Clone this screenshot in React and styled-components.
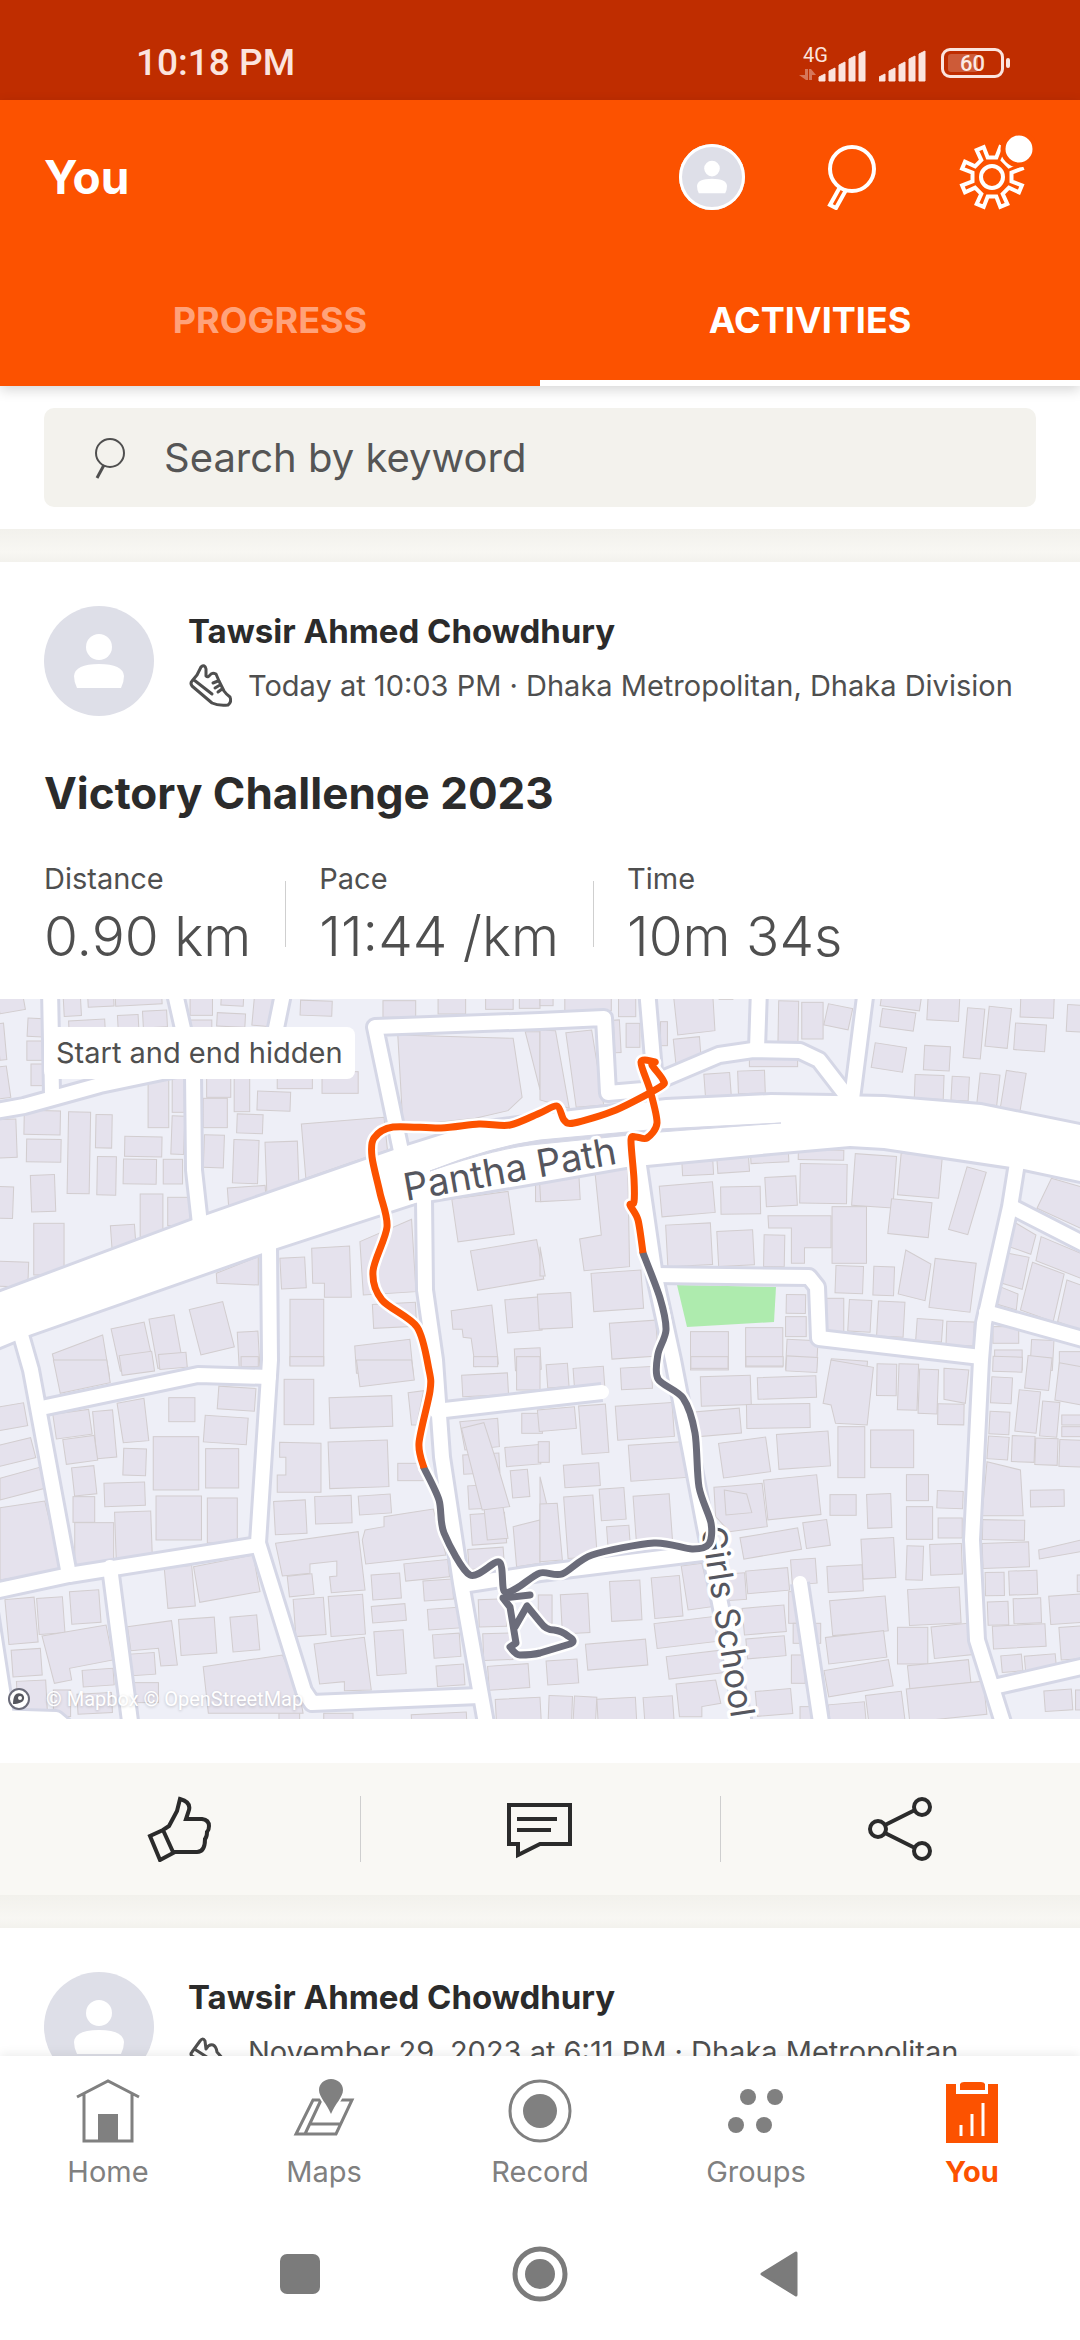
import { useState } from "react";
import styled, { createGlobalStyle } from "styled-components";



// Map artwork, drawn on a 1080 x 720 canvas.
// A building is [x, y, width, height, angle] in the units of its tile,
// anything that is not a plain box is listed as a polygon.
const TILES = [
    {
        x: 0,
        y: -9,
        boxes: [
            [-5, 15, 75, 50, -10], [185, 20, 50, 58, -3], [255, 0, 75, 50, -3], [335, 10, 135, 35, -3],
            [80, 85, 45, 55, 3], [200, 90, 105, 40, -3], [342, 75, 60, 40, -3], [415, 62, 70, 50, -3],
            [552, 20, 65, 56, 0], [642, 15, 65, 32, 3], [735, 20, 55, 88, 5], [630, 70, 82, 40, 3],
            [535, 90, 80, 30, 0], [872, 32, 92, 45, 2], [1112, 32, 95, 50, 0], [1272, 15, 80, 57, 0],
            [1410, 10, 80, 48, 0], [1508, 20, 60, 35, 0], [-5, 100, 20, 110, -5], [78, 153, 45, 58, 0],
            [90, 222, 35, 65, 0], [-10, 230, 35, 95, -8], [430, 265, 60, 148, 0], [500, 265, 35, 102, 0],
            [600, 262, 70, 60, 0], [680, 265, 45, 100, 0], [805, 250, 102, 46, 0], [935, 245, 105, 65, 0],
            [590, 325, 70, 88, 0], [688, 373, 75, 57, 2], [747, 305, 96, 57, 2], [592, 435, 58, 98, 2],
            [498, 378, 37, 115, 2], [70, 362, 105, 72, 1], [-5, 388, 53, 115, -2], [77, 448, 100, 68, 1],
            [197, 366, 64, 245, 1], [278, 374, 47, 100, 1], [282, 500, 55, 115, 1], [362, 440, 108, 60, 1],
            [358, 508, 96, 74, 1], [474, 508, 56, 74, 0], [-5, 590, 43, 95, 2], [90, 555, 70, 110, -2],
            [98, 700, 88, 155, 0], [323, 705, 70, 75, -4], [407, 612, 66, 130, 0], [487, 622, 65, 85, 0],
            [-5, 815, 87, 75, 2], [677, 450, 73, 130, 2], [772, 455, 94, 150, -2], [662, 590, 110, 60, -4],
            [815, 803, 72, 92, -3], [842, 928, 98, 198, 0], [1083, 940, 125, 72, -3], [335, 1005, 98, 130, -12],
            [445, 980, 74, 150, -10], [565, 945, 100, 140, -14], [692, 1025, 60, 120, -3], [1320, 615, 165, 130, -8],
            [1375, 765, 195, 120, -10], [1470, 925, 100, 100, -5], [1495, 1075, 75, 65, -3], [1555, 560, 15, 75, 0],
        ],
        shapes: [
            "1155,135 1490,145 1516,322 1475,362 1380,385 1170,408",
            "1525,125 1568,125 1568,300",
            "875,402 1115,382 1125,480 888,565",
            "628,850 750,800 750,885 630,880",
            "905,775 1015,768 1020,922 942,922 942,880 908,880",
            "1045,755 1195,688 1208,905 1055,915",
            "152,1092 298,1035 318,1160 168,1160",
            "1030,1068 1190,1048 1200,1150 1035,1150",
            "1310,962 1428,945 1447,1122 1380,1130 1368,1045 1345,1042 1342,1018 1315,1018",
        ],
    },
    {
        x: 540,
        y: -9,
        boxes: [
            [0, 20, 38, 27, 0], [72, 20, 135, 42, 0], [228, 20, 50, 60, 0], [215, 90, 18, 98, -3],
            [250, 100, 40, 72, 0], [350, 95, 20, 72, 0], [478, 250, 75, 68, -4], [575, 242, 78, 68, -2],
            [608, 205, 140, 25, 0], [692, 33, 58, 122, 1], [760, 37, 62, 110, 0], [830, 48, 72, 65, 12],
            [990, 62, 98, 55, 8], [990, 15, 115, 40, 8], [1125, 22, 92, 70, 3], [1235, 55, 50, 150, 5],
            [1298, 52, 65, 120, 6], [1395, 20, 97, 63, 2], [1378, 102, 90, 80, 4], [1530, 45, 50, 80, 3],
            [967, 165, 92, 75, 9], [1115, 168, 75, 73, 3], [1088, 255, 84, 72, 2], [1195, 260, 50, 72, 3],
            [1273, 252, 58, 92, 6], [1345, 245, 58, 115, 9], [520, 0, 40, 28, 0], [413, 515, 90, 40, -3],
            [515, 505, 92, 42, -4], [612, 490, 110, 28, -3], [750, 480, 132, 30, 1], [350, 582, 155, 92, -5],
            [525, 590, 115, 82, -1], [655, 560, 90, 88, -3], [755, 522, 136, 118, 1], [910, 495, 120, 155, 4],
            [1043, 495, 120, 125, 5], [1015, 632, 118, 105, 6], [1212, 535, 58, 195, 16], [368, 702, 130, 125, -3],
            [516, 722, 104, 105, -3], [650, 735, 60, 95, 1], [848, 650, 100, 170, 0], [1138, 812, 120, 148, 7],
            [858, 828, 80, 82, 2], [968, 830, 60, 86, 2], [832, 925, 50, 100, 0], [896, 930, 65, 95, 3],
            [980, 935, 77, 105, 3], [1093, 988, 75, 66, 4], [1180, 995, 80, 72, 2], [715, 914, 56, 56, 1],
            [713, 980, 60, 60, 0], [715, 1050, 90, 90, 3], [437, 1025, 110, 115, 0], [597, 1013, 108, 118, 0],
            [1315, 1010, 75, 50, 0], [1425, 1050, 65, 90, 3], [1320, 1080, 80, 60, 0], [1508, 1085, 62, 75, 0],
            [845, 1110, 105, 30, 4], [0, 560, 115, 72, -3], [152, 845, 145, 115, -4], [-5, 910, 97, 105, -3],
            [205, 995, 135, 108, -4],
        ],
        shapes: [
            "388,20 502,20 508,122 400,135",
            "387,148 463,140 467,195 395,225",
            "0,120 45,122 85,355 0,330",
            "75,128 150,120 185,345 105,352",
            "1485,565 1570,590 1570,715 1443,655",
            "662,677 845,677 845,773 768,773 768,820 730,820 730,714 664,714",
            "1062,780 1135,822 1118,932 1040,912",
            "1375,695 1440,735 1425,793 1362,770",
            "1455,740 1570,790 1570,865 1440,812",
            "1360,790 1420,802 1400,898 1342,880",
            "1430,817 1522,852 1490,995 1395,960",
            "1530,870 1570,885 1570,1020 1503,995",
            "1335,890 1388,912 1383,960 1318,940",
            "160,550 255,535 260,830 128,842 115,747 178,735",
            "0,770 15,858 0,858",
        ],
    },
    {
        x: 0,
        y: 361,
        boxes: [
            [350, -20, 95, 60, -8], [462, -20, 80, 45, -5], [700, -10, 50, 30, 0], [-10, 135, 85, 70, -10],
            [-10, 245, 108, 62, -14], [158, 155, 105, 75, -8], [275, 152, 58, 142, -5], [490, 113, 76, 72, 0],
            [633, 82, 108, 68, 4], [593, 170, 125, 80, 4], [187, 232, 92, 75, -8], [358, 266, 66, 80, 2],
            [445, 230, 132, 160, 0], [597, 266, 96, 118, 0], [212, 320, 65, 85, -6], [303, 368, 118, 70, -2],
            [212, 410, 63, 77, 0], [217, 488, 113, 130, 0], [335, 455, 105, 140, -2], [453, 408, 132, 132, 0],
            [602, 414, 87, 135, 0], [482, 620, 80, 122, -5], [522, 775, 104, 108, -4], [672, 768, 78, 105, -5],
            [380, 880, 70, 65, -4], [385, 968, 75, 60, 0], [20, 715, 85, 135, -5], [110, 713, 75, 108, -4],
            [205, 692, 85, 98, -4], [35, 868, 85, 80, -4], [240, 928, 90, 50, -4], [50, 962, 85, 90, -3],
            [155, 990, 50, 80, 0], [225, 1000, 100, 60, -3], [842, -10, 98, 28, 0], [825, 58, 86, 136, 0],
            [957, 110, 182, 92, -2], [955, 243, 172, 140, -2], [1155, 310, 80, 52, 0], [797, 422, 92, 100, -3],
            [915, 408, 106, 82, -2], [1042, 405, 93, 57, -4], [837, 645, 72, 62, -6], [855, 715, 88, 112, -4],
            [957, 706, 100, 120, -4], [1080, 642, 83, 75, -4], [1175, 605, 128, 52, -6], [1230, 660, 85, 60, -4],
            [1080, 735, 98, 50, -5], [1243, 745, 90, 62, -4], [1258, 822, 78, 70, -4], [1090, 812, 85, 132, -4],
            [1268, 915, 80, 62, -4], [1195, 1060, 160, 40, -3], [940, 1060, 85, 30, 0], [810, 1055, 60, 30, 0],
            [1375, -10, 70, 30, 0], [1500, -10, 68, 100, 0], [1342, 42, 133, 65, -3], [1515, 160, 60, 60, 0],
            [1345, 282, 105, 58, -3], [1360, 375, 100, 70, -3], [1468, 258, 100, 58, -5], [1485, 330, 50, 82, -5],
            [1368, 460, 100, 92, -4], [1360, 565, 103, 60, -4], [1390, 718, 80, 82, -2], [1403, 820, 85, 80, -2],
            [1418, 915, 118, 72, -4], [1440, 1015, 130, 80, -3],
        ],
        shapes: [
            "155,0 310,0 320,68 175,100",
            "0,355 115,322 130,385 0,420",
            "0,443 130,423 178,630 0,660",
            "340,130 418,115 432,242 358,248",
            "562,620 735,585 755,695 580,727",
            "370,800 498,782 515,915 467,918 460,865 380,872",
            "590,920 820,885 870,1000 880,1060 605,1060",
            "122,828 308,795 328,900 202,925 208,960 158,970",
            "1035,0 1195,0 1203,60 1045,80",
            "1185,98 1230,92 1210,195 1195,195",
            "812,247 932,250 932,397 805,397 805,345 830,345 830,292 812,292",
            "1060,510 1115,500 1115,470 1258,447 1295,585 1062,612 1052,540",
            "800,550 1040,515 1060,690 962,698 957,650 978,648 978,603 900,612 900,640 820,648",
            "912,852 1058,832 1078,990 1000,992 1000,965 928,972",
            "1335,185 1445,175 1450,260 1350,270",
            "1400,390 1450,372 1475,535 1415,540",
            "1340,205 1405,188 1440,300 1480,440 1400,450",
            "1490,500 1568,480 1568,610 1500,620",
        ],
    },
    {
        x: 540,
        y: 361,
        boxes: [
            [20, 12, 62, 70, -4], [98, 22, 88, 60, -4], [235, 22, 90, 65, -3], [-5, 145, 108, 65, -5],
            [117, 135, 78, 145, -4], [222, 133, 165, 102, -4], [-5, 245, 32, 62, 0], [260, 250, 165, 108, -4],
            [70, 312, 103, 68, -4], [75, 408, 85, 185, -4], [175, 385, 72, 95, -4], [275, 405, 105, 140, -4],
            [195, 498, 65, 55, -4], [438, -10, 108, 35, 0], [598, -10, 108, 28, 0], [715, -10, 90, 45, 3],
            [467, 48, 145, 88, -2], [632, 50, 170, 65, -2], [450, 150, 132, 75, -5], [600, 132, 184, 72, -1],
            [525, 240, 138, 105, -8], [690, 218, 150, 105, -4], [865, 200, 78, 153, 0], [960, 210, 125, 113, 0],
            [978, 12, 57, 95, 1], [1040, 12, 57, 138, 2], [1100, 28, 55, 133, 2], [1155, 132, 76, 62, 1],
            [655, 352, 155, 120, -6], [842, 404, 76, 62, 0], [950, 402, 70, 102, -2], [1064, 344, 64, 78, 0],
            [1153, 393, 75, 52, 2], [1064, 440, 76, 98, 0], [1156, 474, 70, 60, 0], [935, 535, 95, 120, -3],
            [1064, 558, 48, 102, 2], [1133, 552, 92, 92, -2], [585, 518, 170, 65, -10], [768, 483, 70, 78, -8],
            [730, 597, 72, 75, -4], [835, 617, 102, 78, -3], [600, 628, 122, 68, -5], [1070, 685, 150, 108, -3],
            [845, 715, 162, 105, -5], [590, 740, 122, 80, -5], [722, 695, 45, 95, 0], [1038, 802, 88, 110, 0],
            [1140, 795, 115, 95, -6], [833, 822, 170, 80, -7], [600, 832, 112, 60, -5], [830, 915, 190, 80, -10],
            [1070, 908, 178, 70, -6], [1068, 975, 225, 100, -6], [840, 1030, 105, 70, -5], [950, 1000, 105, 90, -7],
            [628, 990, 103, 75, -5], [730, 885, 40, 85, 0], [735, 790, 80, 60, 0], [755, 1040, 50, 50, 0],
            [545, 640, 52, 80, -4], [328, 650, 82, 122, -5], [205, 662, 88, 120, -3], [62, 702, 80, 118, -3],
            [-5, 705, 40, 85, 0], [335, 780, 175, 75, -7], [370, 880, 160, 68, -7], [135, 845, 175, 78, -5],
            [20, 900, 90, 72, -4], [25, 1008, 68, 80, 2], [98, 1010, 65, 80, 3], [167, 1015, 112, 75, -3],
            [302, 1010, 85, 80, -4], [1315, -10, 85, 45, 2], [1412, -10, 70, 98, 6], [1310, 52, 60, 78, 3],
            [1385, 92, 62, 125, 6], [1455, 125, 50, 105, 5], [1515, 165, 60, 30, 0], [1305, 155, 58, 68, 3],
            [1515, 200, 60, 30, 0], [1300, 230, 60, 68, 4], [1370, 228, 66, 78, 2], [1438, 235, 65, 80, 2],
            [1508, 240, 70, 80, 2], [1424, 390, 98, 50, -1], [1285, 480, 122, 60, 1], [1285, 548, 135, 75, -2],
            [1293, 637, 55, 70, -1], [1362, 632, 82, 72, -2], [1300, 725, 60, 70, -2], [1375, 715, 80, 75, -2],
            [1480, 705, 100, 85, -4], [1315, 795, 153, 68, -3], [1510, 800, 70, 98, -4], [1340, 885, 60, 50, -5],
            [1408, 885, 90, 45, -5], [1465, 990, 80, 62, -4], [1555, 990, 20, 60, 0], [1560, 645, 20, 50, 0],
        ],
        shapes: [
            "0,350 20,435 45,510 0,518",
            "0,432 50,430 65,600 0,605",
            "845,0 968,22 950,195 858,190 845,135 822,130",
            "1173,25 1245,30 1235,130 1173,118",
            "505,382 555,378 645,370 660,500 550,515 510,470",
            "535,390 600,402 615,458 540,465",
            "410,618 470,610 500,740 430,750",
            "395,972 510,960 525,1030 470,1040 470,1070 405,1070",
            "1508,8 1570,20 1570,135 1495,120",
            "1298,305 1395,330 1403,467 1283,467",
            "1448,570 1570,540 1570,575 1450,597",
        ],
    },
];

const ROADS = [
    "50,-10 52,95",
    "-10,113 24,107 100,86 186,68 241,54 275,34 284,-10",
    "174,-10 193,74 194,171 200,225",
    "401,152 375,28 540,22 604,19 608,94 643,91 660,81 719,56 753,51 800,52 819,61 846,96",
    "647,-10 655,84",
    "759,-10 757,50",
    "866,-10 852,100",
    "1017,164 1010,208 984,324 981,361 972,541 977,641 1005,730",
    "1012,208 1090,248",
    "986,313 1090,342",
    "655,276 809,278 817,288 819,339 981,358",
    "638,160 655,278 673,361 691,454 705,528 745,730",
    "436,412 540,400 602,393",
    "424,200 425,291 435,361 442,458 461,584 487,730",
    "462,586 540,574 702,554",
    "269,248 270,361 258,544 304,692 312,704 479,697",
    "21,336 31,371 69,576",
    "46,408 198,376 269,378",
    "-10,593 69,576 258,546",
    "110,568 131,730",
    "-12,600 8,730",
    "-10,718 56,720 70,732",
    "800,584 822,730",
    "998,687 1090,666",
];

const MAIN_ROAD =
    "M-10 297 L193 221 L394 151 L480 124 L571 112 L666 101 L771 96 L834 97 L884 98 L981 106 L1090 128 " +
    "L1090 184 L1024 170 L884 149 L850 147 L771 154 L626 168 L540 183 L415 204 L277 249 L29 336 L-10 352 Z";

const ORANGE_ROUTE = [
    [643, 254], [638, 221], [630, 206], [634, 203], [634, 180], [631, 141], [636, 138], [647, 139], [657, 124],
    [650, 91], [641, 63], [655, 63], [652, 66], [663, 81], [660, 88], [616, 111], [574, 124], [564, 121],
    [557, 107], [540, 114], [510, 126], [479, 125], [441, 129], [393, 128], [374, 139], [372, 158], [380, 194],
    [387, 228], [373, 272], [382, 301], [417, 328], [429, 371], [430, 392], [419, 444], [424, 469],
];

const GREY_ROUTE = [
    [424, 469], [439, 501], [444, 534], [470, 576], [499, 563], [504, 592], [517, 589], [540, 574], [562, 575],
    [592, 556], [654, 544], [692, 550], [709, 545], [711, 524], [699, 488], [695, 434], [683, 399], [658, 380],
    [658, 355], [666, 331], [660, 299], [643, 254],
];

const GREY_LOOP =
    "M530 596 L503 599 L510 608 L516 644 L510 648 Q516 656 520 656 Q532 656 540 654 L570 645 Q577 642 568 637 " +
    "Q562 632 554 631 Q546 631 541 624 L527 607 L515 628";

// Catmull-Rom through the recorded points
const smooth = (pts) => {
    let d = `M${pts[0].join(" ")}`;
    for (let i = 0; i < pts.length - 1; i++) {
        const p0 = pts[i - 1] || pts[i];
        const p1 = pts[i];
        const p2 = pts[i + 1];
        const p3 = pts[i + 2] || p2;
        const c1 = [p1[0] + (p2[0] - p0[0]) / 7, p1[1] + (p2[1] - p0[1]) / 7];
        const c2 = [p2[0] - (p3[0] - p1[0]) / 7, p2[1] - (p3[1] - p1[1]) / 7];
        d += ` C${c1.join(" ")} ${c2.join(" ")} ${p2.join(" ")}`;
    }
    return d;
};

const gearPath = () => {
    const at = (r, deg) => {
        const a = (deg * Math.PI) / 180;
        return `${(33 + r * Math.sin(a)).toFixed(1)} ${(33 - r * Math.cos(a)).toFixed(1)}`;
    };
    const pts = [];
    for (let i = 0; i < 8; i++) {
        const mid = 22.5 + i * 45;
        pts.push(at(20, mid - 10), at(31, mid - 7), at(31, mid + 7), at(20, mid + 10));
    }
    return `M${pts.join(" L")} Z`;
};



function RouteMap() {
    return (
        <MapDrawing viewBox="0 0 1080 720" role="img" aria-label="Route map">
            <rect width="1080" height="720" fill="#eeeff7" />

            {TILES.map((tile) => (
                <g
                    key={`${tile.x}-${tile.y}`}
                    transform={`translate(${tile.x} ${tile.y}) scale(0.3444 0.3333)`}
                    fill="#e5e2ed"
                    stroke="#d2cdcf"
                    strokeWidth="3"
                >
                    {tile.boxes.map(([x, y, w, h, r], i) => (
                        <rect key={i} x={x} y={y} width={w} height={h} transform={`rotate(${r} ${x + w / 2} ${y + h / 2})`} />
                    ))}
                    {tile.shapes.map((points) => (
                        <polygon key={points} points={points} />
                    ))}
                </g>
            ))}

            <polygon points="677,286 776,288 774,323 687,328" fill="#aeebae" />

            <g fill="none" stroke="#d5d7e6" strokeWidth="20" strokeLinejoin="round">
                {ROADS.map((points) => <polyline key={points} points={points} />)}
            </g>
            <path d={MAIN_ROAD} fill="#fff" stroke="#d5d7e6" strokeWidth="6" />
            <g fill="none" stroke="#fff" strokeWidth="14" strokeLinejoin="round" strokeLinecap="round">
                {ROADS.map((points) => <polyline key={points} points={points} />)}
            </g>
            <path d={MAIN_ROAD} fill="#fff" />
            <path d="M430 172 Q500 148 540 145 L660 133 L781 124 L660 130 L540 141 Q490 148 430 172 Z" fill="#d5d7e6" stroke="#d5d7e6" strokeWidth="1" />

            <g fill="#55565e" stroke="#fff" strokeWidth="7" strokeLinejoin="round" paintOrder="stroke" fontFamily="Inter, sans-serif">
                <text transform="translate(406 202) rotate(-10)" fontSize="38">Pantha Path</text>
                <text transform="translate(701 529) rotate(81)" fontSize="34">Girls School</text>
            </g>

            <g fill="none" strokeLinecap="round" strokeLinejoin="round">
                <g stroke="#fff" strokeWidth="12">
                    <path d={smooth(GREY_ROUTE)} />
                    <path d={GREY_LOOP} />
                    <path d={smooth(ORANGE_ROUTE)} />
                </g>
                <g stroke="#6b6c7a" strokeWidth="7">
                    <path d={smooth(GREY_ROUTE)} />
                    <path d={GREY_LOOP} />
                </g>
                <path d={smooth(ORANGE_ROUTE)} stroke="#fc5200" strokeWidth="7" strokeLinecap="butt" />
            </g>
        </MapDrawing>
    );
}

function Person() {
    return (
        <svg viewBox="0 0 110 110" width="100%" height="100%" fill="#fff" aria-hidden="true">
            <circle cx="55" cy="41" r="13" />
            <path d="M33 82 Q30 76 30 70 Q31 58 55 58 Q79 58 80 70 Q80 76 77 82 Z" />
        </svg>
    );
}

const SPORT_ICONS = {
    run: "M13 4 Q17 1 18 6 L18 13 Q20 15 22 12 Q24 9 28 11 L31 18 L36 28 Q38 31 42 34 Q44 39 40 42 Q30 43 24 40 L4 23 Q2 20 4 18 L9 12 Z M6 17 L24 31 M25 20 L30 18 M27 25 L32 22 M30 29 L34 26",
    walk: "M4 23 L12 12 Q15 8 17 12 L18 20 Q21 15 25 16 Q28 17 29 23 L36 31 Q42 34 42 40 H26 L4 27 Q2 25 4 23 Z M8 21 L28 34",
};

function SportIcon({ sport }) {
    return (
        <svg width="46" height="46" viewBox="0 0 46 46" fill="none" stroke="#4f4f4f" strokeWidth="3" strokeLinecap="round" strokeLinejoin="round" aria-hidden="true">
            <path d={SPORT_ICONS[sport]} />
        </svg>
    );
}

function SignalBars({ network }) {
    return (
        <svg width={network ? 68 : 48} height="40" viewBox={network ? "-20 0 68 40" : "0 0 48 40"} fill="#fbe4de" aria-hidden="true">
            {network && (
                <>
                    <text x="-16" y="19" fontFamily="Roboto, sans-serif" fontSize="20">4G</text>
                    <path d="M-20 32 h6 v-6 h3 v11 h-2 Z M-10 37 v-11 h2 l5 6 h-4 v5 Z" opacity="0.4" />
                </>
            )}
            {[7, 13, 19, 25, 30].map((h, i) => (
                <path key={h} d={`M${i * 10} 38 v${3 - h} l6 -3 v${h} Z`} stroke="#fbe4de" strokeWidth="1" strokeLinejoin="round" />
            ))}
        </svg>
    );
}

const NAV_ICONS = {
    Home: (
        <>
            <path d="M2 19 L33 3 L64 19 M9 15 V63 H57 V15" fill="none" stroke="currentColor" strokeWidth="3" />
            <rect x="23" y="36" width="20" height="27" />
        </>
    ),
    Maps: (
        <>
            <path d="M22 22 H61 L45 56 H5 Z M30 22 L14 56 M18 46 H50" fill="none" stroke="currentColor" strokeWidth="3" />
            <path d="M40 1 C47 1 52 6 52 12 C52 19 44 26 40 36 C36 26 28 19 28 12 C28 6 33 1 40 1 Z" stroke="#fff" strokeWidth="4" paintOrder="stroke" />
        </>
    ),
    Record: (
        <>
            <circle cx="33" cy="33" r="30" fill="none" stroke="currentColor" strokeWidth="3" />
            <circle cx="33" cy="33" r="17" />
        </>
    ),
    Groups: (
        <>
            <circle cx="25" cy="19" r="8" />
            <circle cx="52" cy="19" r="8" />
            <circle cx="13" cy="47" r="8" />
            <circle cx="41" cy="47" r="8" />
        </>
    ),
    You: (
        <>
            <path d="M7 6 H17 V16 H49 V6 H59 V65 H7 Z" />
            <path d="M21 6 Q22 4 25 4 H42 Q45 4 46 6 V12 H21 Z" />
            <path d="M22 47 V58 M33 36 V58 M44 25 V58" stroke="#fff" strokeWidth="3" />
        </>
    ),
};

function Athlete({ name, details, sport }) {
    return (
        <AthleteRow>
            <Avatar $size={110}><Person /></Avatar>
            <AthleteText>
                <AthleteName>{name}</AthleteName>
                <AthleteDetails>
                    <SportIcon sport={sport} />
                    <span>{details}</span>
                </AthleteDetails>
            </AthleteText>
        </AthleteRow>
    );
}



function App() {

    const [tab, setTab] = useState("ACTIVITIES");
    const [keyword, setKeyword] = useState("");

    return (
        <Screen>
            <GlobalStyle />

            <StatusBar>
                <Clock>10:18 PM</Clock>
                <StatusIcons>
                    <SignalBars network />
                    <SignalBars />
                    <Battery>
                        <BatteryLevel />
                        60
                    </Battery>
                </StatusIcons>
            </StatusBar>

            <Header>
                <TitleBar>
                    <Title>You</Title>
                    <IconButton aria-label="Profile">
                        <Avatar $size={66} $ring><Person /></Avatar>
                    </IconButton>
                    <IconButton aria-label="Search">
                        <svg width="66" height="66" viewBox="0 0 66 66" fill="none" stroke="#fff" strokeWidth="4">
                            <circle cx="33" cy="25" r="22" />
                            <path d="M21 43 L11 61 L17 64 L27 46" />
                        </svg>
                    </IconButton>
                    <IconButton aria-label="Settings">
                        <svg width="66" height="66" viewBox="0 0 66 66" fill="none" stroke="#fff" strokeWidth="4" overflow="visible">
                            <path d={gearPath()} />
                            <circle cx="33" cy="33" r="11" />
                            <circle cx="60" cy="5" r="16" fill="#fff" stroke="#fc5200" strokeWidth="5" />
                        </svg>
                    </IconButton>
                </TitleBar>
                <Tabs role="tablist">
                    {["PROGRESS", "ACTIVITIES"].map((label) => (
                        <Tab key={label} role="tab" aria-selected={tab === label} $active={tab === label} onClick={() => setTab(label)}>
                            {label}
                        </Tab>
                    ))}
                </Tabs>
            </Header>

            <Feed>
                <SearchSection>
                    <SearchBox>
                        <svg width="36" height="44" viewBox="0 0 36 44" fill="none" stroke="#4f4f4f" strokeWidth="2" aria-hidden="true">
                            <circle cx="18" cy="17" r="14" />
                            <path d="M12 29 L5 42" strokeWidth="3" />
                        </svg>
                        <SearchInput
                            type="text"
                            aria-label="Search by keyword"
                            placeholder="Search by keyword"
                            value={keyword}
                            onChange={(e) => setKeyword(e.target.value)}
                        />
                    </SearchBox>
                </SearchSection>

                <Band />

                <Activity>
                    <Athlete sport="run" name="Tawsir Ahmed Chowdhury" details="Today at 10:03 PM · Dhaka Metropolitan, Dhaka Division" />
                    <ActivityTitle>Victory Challenge 2023</ActivityTitle>
                    <Stats>
                        <Stat><dt>Distance</dt><dd>0.90 km</dd></Stat>
                        <Stat><dt>Pace</dt><dd>11:44 /km</dd></Stat>
                        <Stat><dt>Time</dt><dd>10m 34s</dd></Stat>
                    </Stats>
                    <MapFrame>
                        <RouteMap />
                        <MapChip>Start and end hidden</MapChip>
                        <Attribution>
                            <svg width="24" height="24" viewBox="0 0 24 24" aria-hidden="true">
                                <circle cx="12" cy="12" r="10" fill="#fff" stroke="#6b6c7a" strokeWidth="2" />
                                <path d="M6 17 C6 6 11 5 15 7 C19 10 18 17 6 17 Z" fill="#55565e" />
                                <circle cx="13" cy="11" r="2" fill="#fff" />
                            </svg>
                            <span>© Mapbox © OpenStreetMap</span>
                        </Attribution>
                    </MapFrame>
                    <Actions>
                        <ActionButton aria-label="Give kudos">
                            <svg width="66" height="66" viewBox="0 0 66 66" fill="none" stroke="#2b2b2b" strokeWidth="4">
                                <path d="M33 3 Q44 6 42 14 L39 23 H55 Q62 24 62 30 Q62 34 60 36 Q60 41 58 43 Q58 56 50 56 H28 L13 64 L3 40 L16 34 L22 30 L30 15 Z M16 34 L26 56" />
                            </svg>
                        </ActionButton>
                        <ActionButton aria-label="Comment">
                            <svg width="66" height="66" viewBox="0 0 66 66" fill="none" stroke="#2b2b2b" strokeWidth="4">
                                <path d="M2 9 H63 V48 H33 L11 59 V48 H2 Z M10 23 H50 M10 34 H44" />
                            </svg>
                        </ActionButton>
                        <ActionButton aria-label="Share">
                            <svg width="66" height="66" viewBox="0 0 66 66" fill="none" stroke="#2b2b2b" strokeWidth="4">
                                <circle cx="55" cy="11" r="8" />
                                <circle cx="11" cy="33" r="8" />
                                <circle cx="55" cy="55" r="8" />
                                <path d="M18 29 L48 14 M18 37 L48 52" />
                            </svg>
                        </ActionButton>
                    </Actions>
                </Activity>

                <Band />

                <Activity>
                    <Athlete sport="walk" name="Tawsir Ahmed Chowdhury" details="November 29, 2023 at 6:11 PM · Dhaka Metropolitan" />
                </Activity>
            </Feed>

            <BottomNav>
                {Object.keys(NAV_ICONS).map((label) => (
                    <NavLink key={label} href={`#${label.toLowerCase()}`} $active={label === "You"}>
                        <svg width="66" height="66" viewBox="0 0 66 66" fill="currentColor" aria-hidden="true">
                            {NAV_ICONS[label]}
                        </svg>
                        {label}
                    </NavLink>
                ))}
            </BottomNav>

            <SystemNav>
                <SystemButton aria-label="Recent apps">
                    <svg width="60" height="60" viewBox="0 0 60 60" fill="#7b7b7b"><rect x="10" y="10" width="40" height="40" rx="7" /></svg>
                </SystemButton>
                <SystemButton aria-label="Home screen">
                    <svg width="60" height="60" viewBox="0 0 60 60" fill="#7b7b7b">
                        <circle cx="30" cy="30" r="25" fill="none" stroke="#7b7b7b" strokeWidth="5" />
                        <circle cx="30" cy="30" r="15" />
                    </svg>
                </SystemButton>
                <SystemButton aria-label="Back">
                    <svg width="60" height="60" viewBox="0 0 60 60" fill="#7b7b7b" stroke="#7b7b7b" strokeWidth="3" strokeLinejoin="round">
                        <path d="M12 30 L46 9 V51 Z" />
                    </svg>
                </SystemButton>
            </SystemNav>
        </Screen>
    );

}



export default App;

const GlobalStyle = createGlobalStyle`
* {
    box-sizing: border-box;
}

body {
    margin: 0;
    background-color: white;
}

button {
    padding: 0;
    border: 0;
    background: none;
    font: inherit;
    color: inherit;
    cursor: pointer;
}

svg {
    display: block;
    flex-shrink: 0;
}
`;

const Screen = styled.div`
display: flex;
flex-direction: column;
height: 100vh;
font-family: Inter, "Liberation Sans", sans-serif;
color: #4f4f4f;
background-color: white;
`;

const StatusBar = styled.div`
display: flex;
align-items: center;
justify-content: space-between;
height: 100px;
padding: 26px 76px 0 136px;
background-color: #bf2d00;
color: #fbe4de;
font-family: Roboto, sans-serif;
`;

const Clock = styled.span`
font-size: 37px;
line-height: 44px;
font-weight: 500;
`;

const StatusIcons = styled.div`
display: flex;
align-items: center;
gap: 12px;
`;

const Battery = styled.div`
position: relative;
display: flex;
align-items: center;
justify-content: center;
width: 63px;
height: 30px;
margin-left: 2px;
border: 3px solid #fbe4de;
border-radius: 9px;
font-size: 22px;
font-weight: 500;

&::after {
    content: "";
    position: absolute;
    top: 7px;
    right: -9px;
    width: 4px;
    height: 10px;
    border-radius: 2px;
    background-color: #fbe4de;
}
`;

const BatteryLevel = styled.span`
position: absolute;
top: 3px;
left: 4px;
width: 30px;
height: 18px;
border-radius: 3px;
background-color: rgba(255, 255, 255, 0.22);
`;

const Header = styled.header`
position: relative;
z-index: 1;
background-color: #fc5200;
color: white;
box-shadow: 0 4px 12px rgba(0, 0, 0, 0.16);
`;

const TitleBar = styled.div`
display: flex;
align-items: center;
gap: 74px;
height: 154px;
padding: 0 55px 0 44px;
`;

const Title = styled.h1`
flex: 1;
margin: 0;
font-size: 46px;
line-height: 60px;
font-weight: 700;
`;

const IconButton = styled.button`
width: 66px;
height: 66px;
`;

const Avatar = styled.div`
flex-shrink: 0;
width: ${(props) => props.$size}px;
height: ${(props) => props.$size}px;
border-radius: 50%;
background-color: #dedfe8;
box-shadow: ${(props) => (props.$ring ? "inset 0 0 0 3px white" : "none")};
`;

const Tabs = styled.div`
display: flex;
`;

const Tab = styled.button`
flex: 1;
height: 132px;
padding-top: 6px;
border-bottom: 6px solid ${(props) => (props.$active ? "white" : "transparent")};
color: ${(props) => (props.$active ? "white" : "#ffa27a")};
font-size: 36px;
line-height: 44px;
font-weight: 700;
`;

const Feed = styled.main`
flex: 1;
min-height: 0;
overflow-y: auto;
scrollbar-width: none;
`;

const SearchSection = styled.div`
padding: 22px 44px;
`;

const SearchBox = styled.div`
display: flex;
align-items: center;
gap: 36px;
height: 99px;
padding: 0 48px;
border-radius: 10px;
background-color: #f3f2ed;
`;

const SearchInput = styled.input`
flex: 1;
min-width: 0;
padding: 0;
border: 0;
outline: 0;
background: none;
font: inherit;
font-size: 40px;
line-height: 50px;
color: #4f4f4f;

&::placeholder {
    color: #555;
    opacity: 1;
}
`;

const Band = styled.div`
height: 33px;
background: linear-gradient(#f2f1ec, #f8f7f3 70%, #f3f2ed);
`;

const Activity = styled.article`
background-color: white;
`;

const AthleteRow = styled.div`
display: flex;
align-items: center;
gap: 34px;
padding: 44px 44px 0;
`;

const AthleteText = styled.div`
min-width: 0;
`;

const AthleteName = styled.h2`
margin: 0;
font-size: 33px;
line-height: 50px;
font-weight: 700;
color: #2b2b2b;
`;

const AthleteDetails = styled.div`
display: flex;
align-items: center;
gap: 14px;
height: 60px;
font-size: 29px;
line-height: 36px;
white-space: nowrap;
`;

const ActivityTitle = styled.h3`
margin: 0;
padding: 47px 44px 0;
font-size: 44px;
line-height: 60px;
font-weight: 700;
color: #2b2b2b;
`;

const Stats = styled.dl`
display: flex;
margin: 0;
padding: 38px 10px 28px;
`;

const Stat = styled.div`
position: relative;
padding: 0 34px;

& + &::before {
    content: "";
    position: absolute;
    left: 0;
    top: 20px;
    width: 1px;
    height: 66px;
    background-color: #cfcfcf;
}

dt {
    font-size: 29px;
    line-height: 36px;
}

dd {
    margin: 4px 0 0;
    font-size: 55px;
    line-height: 70px;
    font-weight: 300;
}
`;

const MapFrame = styled.div`
position: relative;
`;

const MapDrawing = styled.svg`
width: 100%;
height: auto;
`;

const MapChip = styled.span`
position: absolute;
top: 28px;
left: 44px;
padding: 8px 12px;
border-radius: 8px;
background-color: white;
font-size: 29px;
line-height: 36px;
`;

const Attribution = styled.div`
position: absolute;
left: 7px;
bottom: 8px;
display: flex;
align-items: center;
gap: 15px;
color: white;
font-family: Roboto, sans-serif;
font-size: 20px;
line-height: 24px;
text-shadow: 0 1px 3px rgba(0, 0, 0, 0.2);
`;

const Actions = styled.div`
display: flex;
margin-top: 44px;
background-color: #f9f8f4;
`;

const ActionButton = styled.button`
position: relative;
display: flex;
flex: 1;
align-items: center;
justify-content: center;
height: 132px;

& + &::before {
    content: "";
    position: absolute;
    left: 0;
    top: 33px;
    width: 1px;
    height: 66px;
    background-color: #cfcfcf;
}
`;

const BottomNav = styled.nav`
position: relative;
display: flex;
padding: 22px 0 18px;
background-color: white;
box-shadow: 0 -2px 10px rgba(0, 0, 0, 0.08);
`;

const NavLink = styled.a`
display: flex;
flex: 1;
flex-direction: column;
align-items: center;
gap: 10px;
color: ${(props) => (props.$active ? "#fc5200" : "#808080")};
font-size: 29px;
line-height: 36px;
font-weight: ${(props) => (props.$active ? 700 : 400)};
text-decoration: none;
`;

const SystemNav = styled.div`
position: relative;
display: flex;
justify-content: center;
gap: 180px;
padding: 36px 0;
background-color: white;
`;

const SystemButton = styled.button`
width: 60px;
height: 60px;
`;
